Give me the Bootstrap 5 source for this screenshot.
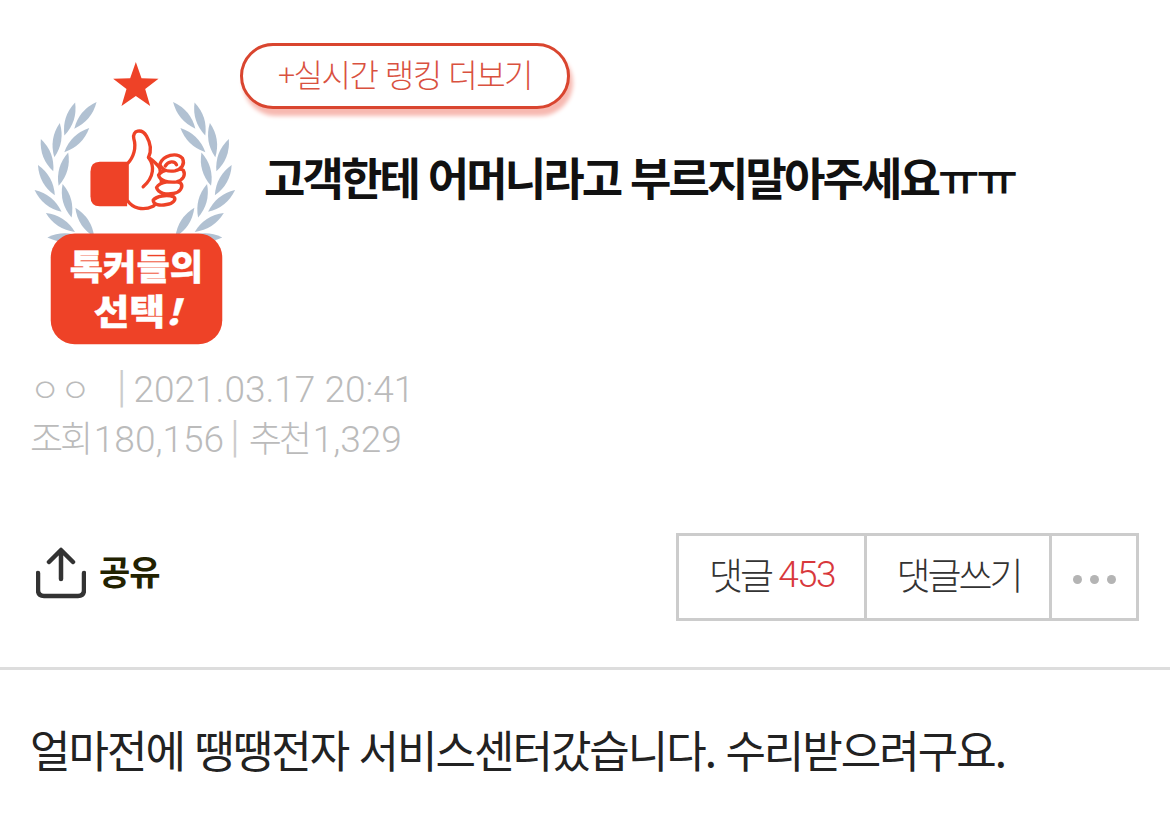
<!DOCTYPE html>
<html lang="ko">
<head>
    <meta charset="UTF-8">
    <meta name="viewport" content="width=device-width, initial-scale=1.0">
    <title>고객한테 어머니라고 부르지말아주세요</title>
    <link href="https://cdn.jsdelivr.net/npm/bootstrap@5.3.0/dist/css/bootstrap.min.css" rel="stylesheet">
    <style>
        body {
            background: #fff;
            font-family: "Liberation Sans", "Noto Sans CJK KR", sans-serif;
            overflow: hidden;
        }
        .top-wrap { padding: 43px 0 0 33px; }
        .award { width: 207px; height: 287px; margin-top: 17px; flex: none; }
        .award text { font-family: "Noto Sans CJK KR", sans-serif; font-weight: 900; fill: #fff; stroke: #fff; stroke-width: 1px; }
        .rank-btn {
            width: 330px; height: 66px;
            border: 3px solid #d9452f;
            border-radius: 33px;
            box-shadow: 3px 7px 4px #f7b9b1;
            color: #d9513f;
            font-family: "Noto Sans CJK KR", sans-serif;
            font-size: 32px;
            letter-spacing: -1.5px;
            font-weight: 300;
            padding: 0 0 6px;
            background: #fff;
        }
        .post-title {
            font-family: "Noto Sans CJK KR", sans-serif;
            font-size: 45px;
            font-weight: 700;
            letter-spacing: -2.9px;
            color: #111;
            margin: 38px 0 0 24px;
            line-height: 60px;
            white-space: nowrap;
        }
        .title-sob { font-weight: 500; }
        .meta-wrap { padding: 17px 0 0 30px; color: #bbb; font-family: Roboto, "Noto Sans CJK KR", sans-serif; font-size: 37px; font-weight: 300; white-space: nowrap; }
        .meta-line { height: 48px; line-height: 48px; }
        .meta-wrap .sep { color: #ccc; font-size: 44px; font-weight: 300; line-height: 0; }
        .sep-a { margin: 0 7px 0 26px; }
        .sep-b { margin: 0 9px 0 6px; }
        .meta-ko { font-family: "Noto Sans CJK KR", sans-serif; font-size: 36px; letter-spacing: -3.2px; font-weight: 300; margin-right: 4px; }
        .meta-name { font-size: 33px; font-family: "Noto Sans CJK KR", sans-serif; }
        .action-row { padding: 73px 31px 0 36px; }
        .share-box { padding-bottom: 8px; }
        .share-label { font-family: "Noto Sans CJK KR", sans-serif; font-weight: 700; font-size: 34px; color: #222200; margin: 0 0 6px 13px; letter-spacing: -1px; }
        .cmt-group { height: 88px; border: 3px solid #ccc; border-radius: 0; }
        .cmt-cell {
            border: 0; border-radius: 0; padding: 0 0 4px; background: #fff;
            font-family: "Noto Sans CJK KR", sans-serif; font-weight: 300;
            font-size: 37px; color: #333; letter-spacing: -3px;
            display: flex; align-items: center; justify-content: center;
        }
        .cmt-cell + .cmt-cell { border-left: 3px solid #ccc; }
        .cell-a { width: 186px; }
        .cell-b { width: 186px; }
        .cell-c { width: 87px; padding-top: 8px; }
        .cmt-num { color: #d8383c; margin-left: 7px; font-family: Roboto, sans-serif; font-weight: 300; letter-spacing: -1.6px; }
        .dot-item { width: 9px; height: 9px; border-radius: 50%; background: #b4b4b4; }
        .rule-line { border-top: 3px solid #ddd; margin: 46px 0 0; opacity: 1; }
        .post-body {
            padding: 47px 0 0 30px; margin: 0;
            font-family: "Noto Sans CJK KR", sans-serif; font-weight: 400;
            font-size: 44px; line-height: 64px; letter-spacing: -2px; color: #222;
            white-space: nowrap;
        }
    </style>
</head>
<body>
    <div class="top-wrap d-flex">
        <svg class="award" viewBox="40 60 620 860">
            <defs>
                <path id="leaf" d="M-52 0Q0 -25 52 0Q0 25 -52 0Z" fill="#b1c1d2"/>
                <g id="wreath">
                    <use href="#leaf" transform="translate(197 226) rotate(-50)"/>
                    <use href="#leaf" transform="translate(150 237) rotate(-72)"/>
                    <use href="#leaf" transform="translate(112 300) rotate(-81)"/>
                    <use href="#leaf" transform="translate(171 300) rotate(-44)"/>
                    <use href="#leaf" transform="translate(82 345) rotate(69)"/>
                    <use href="#leaf" transform="translate(131 387) rotate(-74)"/>
                    <use href="#leaf" transform="translate(80 420) rotate(61)"/>
                    <use href="#leaf" transform="translate(142 482) rotate(75)"/>
                    <use href="#leaf" transform="translate(85 482) rotate(39)"/>
                    <use href="#leaf" transform="translate(122 547) rotate(33)"/>
                    <use href="#leaf" transform="translate(195 546) rotate(57)"/>
                    <use href="#leaf" transform="translate(135 592)"/>
                </g>
            </defs>
            <use href="#wreath"/>
            <use href="#wreath" transform="translate(690 0) scale(-1 1)"/>
            <path d="M348 66L365 115L416 116L376 147L391 198L348 168L305 198L320 147L280 116L331 115Z" fill="#ee4227"/>
            <path d="M322 365H240Q212 365 212 395V468Q212 498 240 498H322Z" fill="#ee4227"/>
            <g fill="#fff" stroke="#ee4227" stroke-width="10" stroke-linejoin="round" stroke-linecap="round">
                <path d="M322 372C342 352 350 322 342 296C336 270 366 264 380 288C394 312 394 335 386 352C400 362 412 372 420 385L430 470L400 498C370 512 338 505 322 480Z"/>
                <path d="M400 480C410 468 440 462 462 470C470 478 460 490 440 493C420 497 400 494 400 480Z"/>
                <path d="M410 442C420 424 460 420 482 428C492 440 480 458 460 460C440 464 415 460 410 442Z"/>
                <path d="M416 405C425 388 470 380 490 390C498 405 490 420 470 425C445 428 420 422 416 405Z"/>
                <path d="M420 372C430 345 470 335 488 355C496 372 485 388 465 392C445 395 425 390 420 372Z"/>
                <path d="M386 352C404 376 404 410 370 440" fill="none"/>
                <path d="M436 378C445 362 465 362 470 374" fill="none"/>
            </g>
            <rect x="93" y="580" width="514" height="332" rx="72" fill="#ee4227"/>
            <text x="350" y="718" text-anchor="middle" font-size="106" textLength="400" lengthAdjust="spacingAndGlyphs">톡커들의</text>
            <text x="352" y="853" text-anchor="middle" font-size="106" textLength="262" lengthAdjust="spacingAndGlyphs">선택<tspan font-style="italic">!</tspan></text>
        </svg>
        <div>
            <button type="button" class="btn rank-btn">+실시간 랭킹 더보기</button>
            <h1 class="post-title">고객한테 어머니라고 부르지말아주세요<span class="title-sob">ㅠㅠ</span></h1>
        </div>
    </div>

    <div class="meta-wrap">
        <div class="meta-line"><span class="meta-name">ㅇㅇ</span><span class="sep sep-a">|</span>2021.03.17 20:41</div>
        <div class="meta-line"><span class="meta-ko">조회</span>180,156<span class="sep sep-b">|</span><span class="meta-ko">추천</span>1,329</div>
    </div>

    <div class="action-row d-flex justify-content-between align-items-center">
        <div class="share-box d-flex align-items-center">
            <svg width="50" height="52" viewBox="0 0 50 52" fill="none" stroke="#333" stroke-width="4.5" stroke-linecap="round" stroke-linejoin="round">
                <path d="M25 32V4M13 15L25 3L37 15"/>
                <path d="M2 26V43Q2 49 8 49H42Q48 49 48 43V26"/>
            </svg>
            <span class="share-label">공유</span>
        </div>
        <div class="cmt-group btn-group">
            <button type="button" class="btn cmt-cell cell-a">댓글<span class="cmt-num">453</span></button>
            <button type="button" class="btn cmt-cell cell-b">댓글쓰기</button>
            <button type="button" class="btn cmt-cell cell-c gap-2"><span class="dot-item"></span><span class="dot-item"></span><span class="dot-item"></span></button>
        </div>
    </div>

    <hr class="rule-line">
    <p class="post-body">얼마전에 땡땡전자 서비스센터갔습니다. 수리받으려구요.</p>

    <script src="https://cdn.jsdelivr.net/npm/bootstrap@5.3.0/dist/js/bootstrap.bundle.min.js"></script>
</body>
</html>
